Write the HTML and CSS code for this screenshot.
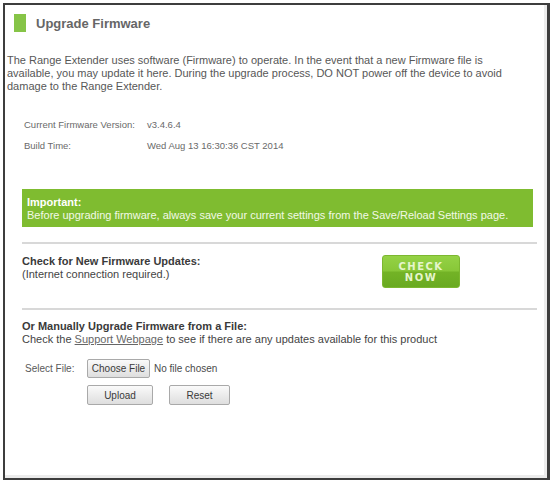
FILE: index.html
```html
<!DOCTYPE html>
<html>
<head>
<meta charset="utf-8">
<link rel="stylesheet" href="styles.css">
</head>
<body>
<div class="frame">
  <div class="header">
    <span class="mark"></span>
    <h1 class="title">Upgrade Firmware</h1>
  </div>
  <p class="intro">The Range Extender uses software (Firmware) to operate. In the event that a new Firmware file is<br>available, you may update it here. During the upgrade process, DO NOT power off the device to avoid<br>damage to the Range Extender.</p>
  <div class="info">
    <span class="label">Current Firmware Version:</span><span class="value">v3.4.6.4</span>
    <span class="label">Build Time:</span><span class="value">Wed Aug 13 16:30:36 CST 2014</span>
  </div>
  <div class="banner">
    <strong>Important:</strong><br>
    Before upgrading firmware, always save your current settings from the Save/Reload Settings page.
  </div>
  <hr class="rule rule-first">
  <div class="check">
    <div class="check-text">
      <strong class="heading">Check for New Firmware Updates:</strong><br>
      (Internet connection required.)
    </div>
    <button class="check-btn">CHECK<br>NOW</button>
  </div>
  <hr class="rule rule-second">
  <div class="manual">
    <strong class="heading">Or Manually Upgrade Firmware from a File:</strong><br>
    Check the <a class="link" href="#">Support Webpage</a> to see if there are any updates available for this product
  </div>
  <div class="file-grid">
    <span class="file-label">Select File:</span>
    <div class="file-row">
      <button class="btn choose">Choose File</button>
      <span class="no-file">No file chosen</span>
    </div>
    <span></span>
    <div class="file-row actions">
      <button class="btn act">Upload</button>
      <button class="btn act reset">Reset</button>
    </div>
  </div>
</div>
</body>
</html>
```
FILE: styles.css
```css
html, body {
  margin: 0;
  padding: 0;
  background: #ffffff;
}
body {
  font-family: "Liberation Sans", Arial, sans-serif;
  color: #555;
}
.frame {
  box-sizing: border-box;
  margin: 3px 1px 0 3px;
  height: 477px;
  border: 2px solid #3d3d3d;
  border-right-width: 3px;
  box-shadow: inset -3px -3px 0 #ececec;
}
.header {
  display: flex;
  align-items: center;
  gap: 10px;
  padding: 9px 0 0 9px;
}
.mark {
  width: 12px;
  height: 18px;
  background: #86c447;
}
.title {
  margin: 0;
  font-size: 13px;
  font-weight: bold;
  color: #666;
}
.intro {
  margin: 22px 0 0 2px;
  font-size: 11px;
  line-height: 13px;
  color: #575757;
}
.info {
  display: grid;
  grid-template-columns: 123px auto;
  grid-auto-rows: 21px;
  align-items: center;
  margin: 21px 0 0 19px;
  font-size: 9.5px;
  color: #6a6a6a;
}
.banner {
  margin: 33px 14px 0 17px;
  padding: 7px 5px 5px 5px;
  background: #7fbc30;
  color: #f2f9e6;
  font-size: 11px;
  line-height: 13px;
}
.banner strong {
  color: #ffffff;
}
.rule {
  border: 0;
  height: 2px;
  background: #d8d8d8;
  margin: 15px 10px 0 17px;
}
.check {
  display: flex;
  align-items: flex-start;
  margin: 11px 0 0 17px;
  font-size: 11px;
  line-height: 13px;
  color: #444;
}
.check-text {
  width: 355px;
}
.heading {
  color: #3a3a3a;
}
.check-btn {
  width: 78px;
  height: 33px;
  margin-left: 5px;
  border: 1px solid #7cb730;
  border-radius: 3px;
  background: linear-gradient(#94d245 0%, #88c738 48%, #73b326 52%, #69aa21 100%);
  color: #e6f5cc;
  font-family: "DejaVu Sans", "Liberation Sans", sans-serif;
  font-weight: bold;
  font-size: 10px;
  line-height: 11px;
  letter-spacing: 1.5px;
  padding: 0;
}
.rule-second {
  margin-top: 20px;
}
.manual {
  margin: 10px 0 0 17px;
  font-size: 11px;
  line-height: 13px;
  color: #444;
}
.link {
  color: #666;
  text-decoration: underline;
}
.file-grid {
  display: grid;
  grid-template-columns: 62px auto;
  row-gap: 7px;
  align-items: center;
  margin: 13px 0 0 20px;
  font-size: 10px;
  color: #5a5a5a;
}
.file-row {
  display: flex;
  align-items: center;
  gap: 4px;
}
.btn {
  font-family: "Liberation Sans", Arial, sans-serif;
  font-size: 10px;
  color: #3a3a3a;
  background: linear-gradient(#fafafa, #dedede);
  border: 1px solid #a9a9a9;
  border-radius: 2px;
  padding: 0;
  height: 19px;
}
.choose {
  width: 63px;
}
.no-file {
  color: #4a4a4a;
}
.actions {
  gap: 16px;
}
.act {
  width: 66px;
  height: 20px;
}
.reset {
  width: 61px;
}
```
